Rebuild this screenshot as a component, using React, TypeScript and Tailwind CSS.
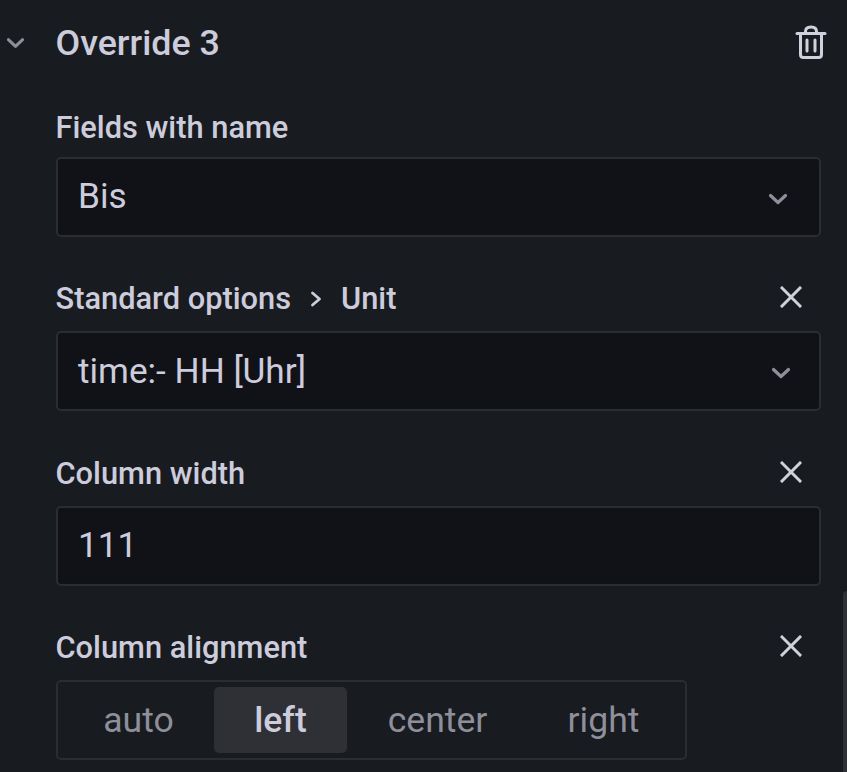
import React from "react";

const Chevron = ({ className }: { className: string }) => (
  <svg className={className} viewBox="0 0 20 12" fill="none" stroke="currentColor" strokeWidth="3.200" strokeLinecap="round" strokeLinejoin="round">
    <path d="M2.500 2.500 10 9.500 17.500 2.500" />
  </svg>
);

const Close = () => (
  <svg className="h-[22px] w-[22px] text-[#d0d1de]" viewBox="0 0 22 22" fill="none" stroke="currentColor" strokeWidth="3" strokeLinecap="square">
    <path d="M2 2 20 20M20 2 2 20" />
  </svg>
);

const Trash = () => (
  <svg className="h-[36px] w-[32px] text-[#d0d1de]" viewBox="0 0 32 36" fill="none" stroke="currentColor" strokeWidth="3" strokeLinejoin="round" strokeLinecap="round">
    <path d="M2 8.500H30" />
    <path d="M10.500 8V6.500C10.500 3.500 12.500 2 16 2s5.500 1.500 5.500 4.500V8" />
    <path d="M5.500 9V29.500C5.500 31.500 6.500 32.500 8.500 32.500H23.500C25.500 32.500 26.500 31.500 26.500 29.500V9" />
    <path d="M12 15V26M20 15V26" />
  </svg>
);

const Field = ({ label, value, chevronX, closable = true, closeLift = "-mt-[4px]" }: { label: React.ReactNode; value: string; chevronX?: string; closable?: boolean; closeLift?: string }) => (
  <div className="flex flex-col">
    <div className={`flex h-[40px] items-center justify-between ${closable ? "-mt-[3px] mb-[12px]" : "mb-[9px]"}`}>
      <div className="-ml-[0.5px] flex items-center text-[30.8px] font-medium leading-[40px] text-[#ccccdc]">{label}</div>
      {closable && <div className={`mr-[19px] ${closeLift}`}><Close /></div>}
    </div>
    <div className="flex h-[80px] items-center justify-between rounded-[5px] border-2 border-[#2b2d32] bg-[#111217] pl-[20px] text-[35.2px] text-[#ccccdc]">
      <span className={closable ? "" : "-mt-[1px]"}>{value}</span>
      {chevronX && <Chevron className={`h-[12px] w-[20px] text-[#8e8f9a] ${chevronX}`} />}
    </div>
  </div>
);

export default function App() {
  return (
    <div className="relative h-[772px] w-[847px] overflow-hidden bg-[#181b1f] pl-[6px] pr-[26px] font-['Roboto',sans-serif]">
      <div className="mb-[22px] flex h-[86px] items-center">
        <Chevron className="mr-[31px] h-[12px] w-[19px] text-[#8e8f9a]" />
        <span className="-ml-[0.5px] text-[35.8px] font-medium leading-[40px] text-[#ccccdc]">Override 3</span>
        <span className="ml-auto mr-[-6px]"><Trash /></span>
      </div>
      <div className="ml-[50px] flex flex-col gap-[45.33px]">
        <Field label="Fields with name" value="Bis" chevronX="mr-[31px] mt-[4px]" closable={false} />
        <Field
          label={
            <>
              Standard options
              <svg className="mx-[19px] h-[16px] w-[12px]" viewBox="0 0 12 16" fill="none" stroke="currentColor" strokeWidth="2.800" strokeLinecap="round" strokeLinejoin="round">
                <path d="M2.500 2 9.500 8 2.500 14" />
              </svg>
              Unit
            </>
          }
          value="time:- HH [Uhr]"
          chevronX="mr-[28px] mt-[4px]"
        />
        <Field label="Column width" value="111" />
        <div className="flex flex-col">
          <div className="-mt-[3px] mb-[12px] flex h-[40px] items-center justify-between">
            <div className="-ml-[0.5px] text-[30.8px] font-medium leading-[40px] text-[#ccccdc]">Column alignment</div>
            <div className="mr-[19px] -mt-[3px]"><Close /></div>
          </div>
          <div className="flex h-[80px] w-[631px] items-center gap-[2px] rounded-[5px] border-2 border-[#2b2d32] pl-[5px] pr-[6px] pt-[1px] text-[35.6px] text-[#8e8f9a]">
            <div className="flex h-[66px] w-[151px] items-center justify-center">auto</div>
            <div className="-ml-[2px] flex h-[66px] w-[133px] items-center justify-center rounded-[5px] bg-[#2e3035] font-medium text-[#ccccdc]">left</div>
            <div className="flex h-[66px] w-[177px] items-center justify-center">center</div>
            <div className="flex h-[66px] flex-1 items-center justify-center">right</div>
          </div>
        </div>
      </div>
      <div className="absolute right-0 top-[591px] h-[181px] w-[4px] rounded-tl-[4px] bg-[#2e3136]" />
    </div>
  );
}
